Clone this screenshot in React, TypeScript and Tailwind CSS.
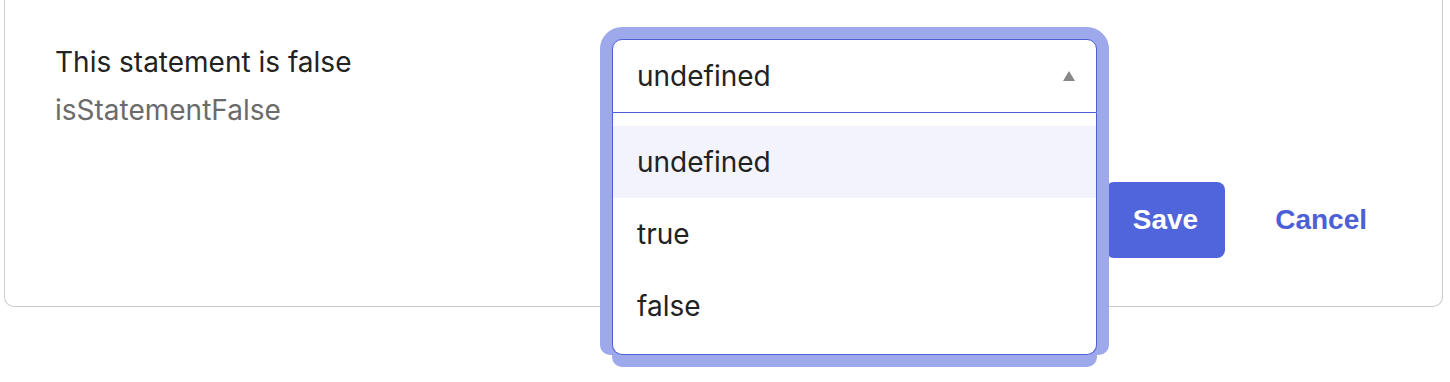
import React from "react";

export default function App() {
  return (
    <div className="w-[1450px] h-[382px] bg-white overflow-hidden font-['Inter',sans-serif] text-[#222222]">
      <div className="ml-[4px] w-[1439px] border-x border-b border-[#cccccc] rounded-b-[10px] pl-[50px] pr-[50px] pb-[48px]">
        <div className="flex items-start pt-[39px]">
          <div className="w-[557px] pt-[5px]">
            <div className="text-[28px] leading-[36px]">This statement is false</div>
            <div className="mt-[12px] text-[28px] leading-[36px] text-[#6b6b6b]">isStatementFalse</div>
          </div>
          <div className="relative w-[485px]">
            <div className="relative flex h-[74px] items-center justify-between rounded-t-[10px] border border-[#4c5fd5] bg-white pl-[24px] pr-[21px] [box-shadow:0_0_0_12px_#9ea9ec]">
              <span className="text-[28px] leading-[36px]">undefined</span>
              <svg width="12" height="10" viewBox="0 0 12 10">
                <polygon points="6,0 12,10 0,10" fill="#888888" />
              </svg>
            </div>
            <div className="absolute left-0 top-full z-10 w-full rounded-b-[10px] border-x border-b border-[#4c5fd5] bg-white pt-[13px] pb-[12px] [box-shadow:-12px_0_0_0_#9ea9ec,12px_0_0_0_#9ea9ec,0_12px_0_0_#9ea9ec]">
              <div className="flex h-[72px] items-center bg-[#f3f3fd] pl-[24px] text-[28px]">undefined</div>
              <div className="flex h-[72px] items-center pl-[24px] text-[28px]">true</div>
              <div className="flex h-[72px] items-center pl-[24px] text-[28px]">false</div>
            </div>
          </div>
        </div>
        <div className="mt-[54px] flex justify-end gap-[25px]">
          <button className="h-[76px] rounded-[8px] bg-[#5064db] px-[27px] font-['Liberation_Sans',Arial,sans-serif] text-[28px] font-bold text-white">
            Save
          </button>
          <button className="h-[76px] px-[25px] font-['Liberation_Sans',Arial,sans-serif] text-[28px] font-bold text-[#4c5fd5]">
            Cancel
          </button>
        </div>
      </div>
    </div>
  );
}
